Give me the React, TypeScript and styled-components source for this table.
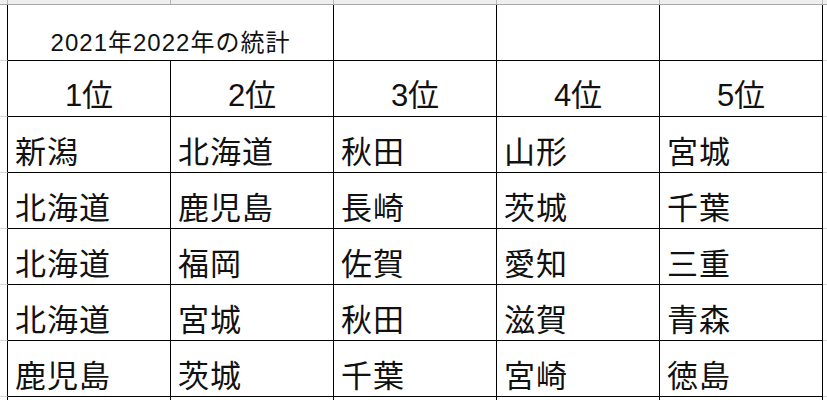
import React from "react";
import styled, { createGlobalStyle } from "styled-components";

const GlobalStyle = createGlobalStyle`
  html, body {
    margin: 0;
    padding: 0;
    background: #ffffff;
  }
  body {
    font-family: "Liberation Sans", "Noto Sans CJK JP", sans-serif;
    color: #111;
  }
`;

const headers = ["1位", "2位", "3位", "4位", "5位"];

const rows: string[][] = [
  ["新潟", "北海道", "秋田", "山形", "宮城"],
  ["北海道", "鹿児島", "長崎", "茨城", "千葉"],
  ["北海道", "福岡", "佐賀", "愛知", "三重"],
  ["北海道", "宮城", "秋田", "滋賀", "青森"],
  ["鹿児島", "茨城", "千葉", "宮崎", "徳島"],
];

export default function App() {
  return (
    <>
      <GlobalStyle />
      <Sheet>
        <TopStrip>
          <StripCell $w={8} />
          {headers.map((h) => (
            <StripCell key={h} $w={163} />
          ))}
          <StripRest />
        </TopStrip>

        <Grid>
          <Gutter />
          <TitleCell $span={2}>2021年2022年の統計</TitleCell>
          <Cell />
          <Cell />
          <Cell />
          <Gutter $end />

          <Gutter />
          {headers.map((h) => (
            <HeadCell key={h}>{h}</HeadCell>
          ))}
          <Gutter $end />

          {rows.map((row, i) => (
            <React.Fragment key={i}>
              <Gutter />
              {row.map((name, j) => (
                <DataCell key={j}>{name}</DataCell>
              ))}
              <Gutter $end />
            </React.Fragment>
          ))}

          <Gutter />
          {headers.map((h) => (
            <Cell key={h} />
          ))}
          <Gutter $end />
        </Grid>
      </Sheet>
    </>
  );
}

/* --- Styled Components --- */
const Sheet = styled.div`
  width: 827px;
  height: 400px;
  overflow: hidden;
  background: #fff;
`;

const TopStrip = styled.div`
  display: flex;
  height: 5px;
  box-sizing: border-box;
  background: #eeeeee;
  border-bottom: 1px solid #a8a8a8;
`;

const StripCell = styled.div<{ $w: number }>`
  width: ${(p) => p.$w}px;
  box-sizing: border-box;
  border-right: 1px solid #b8b8b8;
`;

const StripRest = styled.div`
  flex: 1;
`;

const Grid = styled.div`
  display: grid;
  grid-template-columns: 8px repeat(5, 163px) 1fr;
  grid-auto-rows: 56px;
`;

const Gutter = styled.div<{ $end?: boolean }>`
  box-sizing: border-box;
  border-bottom: 1px solid #d6d6d6;
  border-right: ${(p) => (p.$end ? "none" : "1px solid #000")};
`;

const Cell = styled.div<{ $span?: number }>`
  box-sizing: border-box;
  grid-column: span ${(p) => p.$span ?? 1};
  border-right: 1px solid #000;
  border-bottom: 1px solid #000;
  display: flex;
  align-items: flex-end;
  line-height: 1;
  white-space: nowrap;
`;

const TitleCell = styled(Cell)`
  justify-content: center;
  font-size: 24px;
  letter-spacing: 1px;
  padding-bottom: 5px;
`;

const HeadCell = styled(Cell)`
  justify-content: center;
  font-size: 31px;
  padding-bottom: 5px;
`;

const DataCell = styled(Cell)`
  justify-content: flex-start;
  font-size: 31px;
  letter-spacing: 1px;
  padding-left: 7px;
  padding-bottom: 4px;
`;
